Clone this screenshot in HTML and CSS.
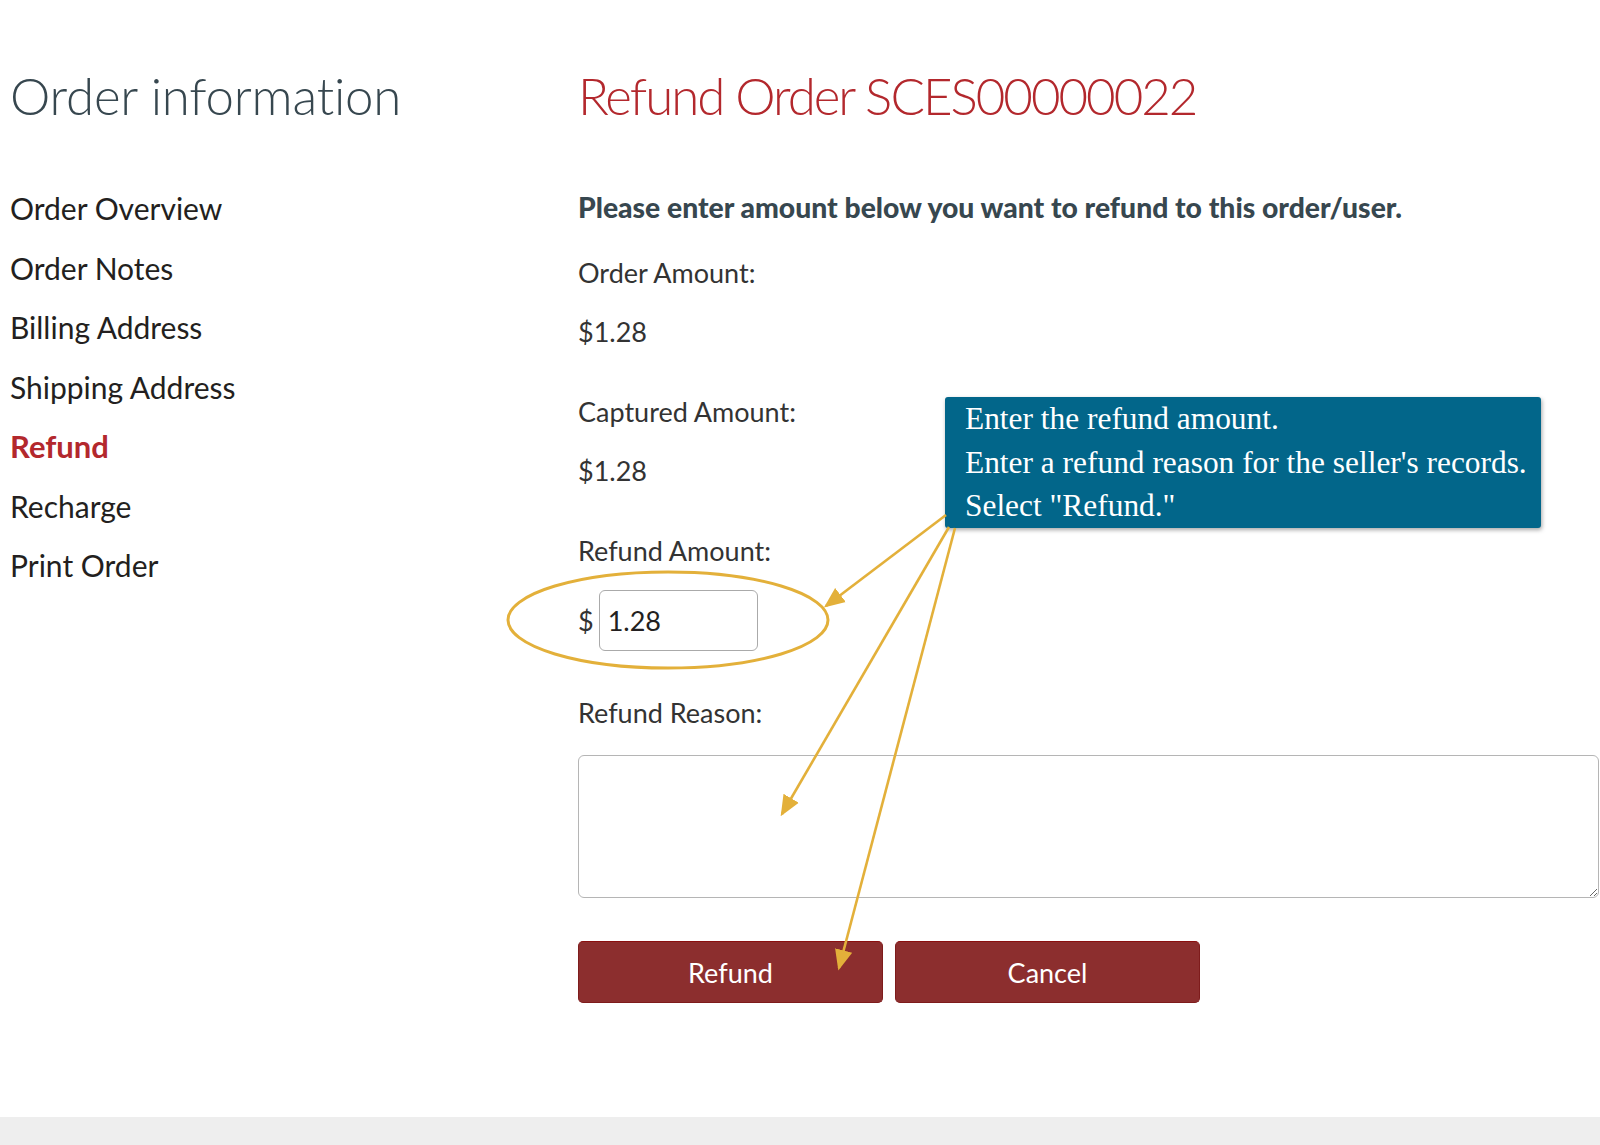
FILE: index.html
```html
<!DOCTYPE html>
<html lang="en">
<head>
<meta charset="utf-8">
<title>Refund Order</title>
<link rel="stylesheet" href="styles.css">
</head>
<body>
<div class="page">
  <aside class="side">
    <h1 class="side-title">Order information</h1>
    <nav class="side-nav">
      <a class="nav-item">Order Overview</a>
      <a class="nav-item">Order Notes</a>
      <a class="nav-item">Billing Address</a>
      <a class="nav-item">Shipping Address</a>
      <a class="nav-item active">Refund</a>
      <a class="nav-item">Recharge</a>
      <a class="nav-item">Print Order</a>
    </nav>
  </aside>
  <main class="main">
    <h1 class="main-title">Refund Order SCES00000022</h1>
    <p class="instruction">Please enter amount below you want to refund to this order/user.</p>
    <div class="field">
      <div class="label">Order Amount:</div>
      <div class="value">$1.28</div>
    </div>
    <div class="field">
      <div class="label">Captured Amount:</div>
      <div class="value">$1.28</div>
    </div>
    <div class="field">
      <div class="label">Refund Amount:</div>
      <div class="amount-row">
        <span class="currency">$</span>
        <input class="amount-input" type="text" value="1.28">
      </div>
    </div>
    <div class="field field-reason">
      <div class="label">Refund Reason:</div>
      <textarea class="reason"></textarea>
    </div>
    <div class="actions">
      <button class="btn">Refund</button>
      <button class="btn">Cancel</button>
    </div>
  </main>
</div>
<footer class="footer"></footer>

<div class="callout">
  <div>Enter the refund amount.</div>
  <div>Enter a refund reason for the seller's records.</div>
  <div>Select "Refund."</div>
</div>

<svg class="annot" width="1600" height="1145" viewBox="0 0 1600 1145">
  <defs>
    <marker id="ah" markerWidth="8" markerHeight="8" refX="7" refY="4" orient="auto" markerUnits="strokeWidth">
      <path d="M0,0.6 L8,4 L0,7.4 Z" fill="#e3b03a"/>
    </marker>
  </defs>
  <ellipse cx="668" cy="620" rx="160" ry="48" fill="none" stroke="#e3b03a" stroke-width="3"/>
  <line x1="946" y1="515" x2="826" y2="606" stroke="#e3b03a" stroke-width="2.6" marker-end="url(#ah)"/>
  <line x1="949" y1="527" x2="782" y2="814" stroke="#e3b03a" stroke-width="2.6" marker-end="url(#ah)"/>
  <line x1="955" y1="528" x2="839" y2="968" stroke="#e3b03a" stroke-width="2.6" marker-end="url(#ah)"/>
</svg>
</body>
</html>
```
FILE: styles.css
```css
html, body {
  margin: 0;
  padding: 0;
  background: #fff;
}
body {
  font-family: Lato, "Open Sans", sans-serif;
  color: #2b2b2b;
  position: relative;
  width: 1600px;
  overflow: hidden;
}
.page {
  display: grid;
  grid-template-columns: 568px 1022px;
  padding: 0 0 0 10px;
  height: 1117px;
}
.side-title,
.main-title {
  font-weight: 300;
  font-size: 51px;
  line-height: 64px;
  margin: 64px 0 0;
  letter-spacing: -0.2px;
}
.side-title {
  color: #37474f;
}
.main-title {
  color: #b3282d;
  letter-spacing: -2px;
}
.side-nav {
  display: flex;
  flex-direction: column;
  margin-top: 51px;
}
.nav-item {
  font-size: 30px;
  line-height: 59.5px;
  height: 59.5px;
  color: #231f20;
}
.nav-item.active {
  color: #b3282d;
  font-weight: 700;
  font-size: 31px;
}
.instruction {
  margin: 59px 0 0;
  font-size: 28.3px;
  line-height: 40px;
  font-weight: 900;
  color: #37474f;
}
.field {
  display: flex;
  flex-direction: column;
}
.label, .value {
  font-size: 27px;
  line-height: 40px;
  color: #333;
}
.label {
  margin-top: 26px;
}
.value {
  margin-top: 19px;
}
.field + .field .label {
  margin-top: 40px;
}
.amount-row {
  display: flex;
  align-items: center;
  margin-top: 19px;
  gap: 5px;
}
.currency {
  font-size: 27px;
  color: #333;
}
.amount-input {
  width: 159px;
  height: 61px;
  box-sizing: border-box;
  border: 1px solid #aaa;
  border-radius: 6px;
  padding: 0 0 0 8px;
  font-family: Lato, sans-serif;
  font-size: 27px;
  color: #231f20;
}
.field.field-reason .label {
  margin-top: 42px;
}
.reason {
  margin-top: 22px;
  width: 1021px;
  height: 143px;
  box-sizing: border-box;
  border: 1px solid #b5b5b5;
  border-radius: 6px;
  resize: both;
  display: block;
}
.actions {
  display: flex;
  gap: 12px;
  margin-top: 43px;
}
.btn {
  width: 305px;
  height: 62px;
  background: #8c2e2e;
  border: 1px solid #7e1c1c;
  border-top-color: #8a0f0f;
  border-radius: 5px;
  color: #fff;
  font-family: Lato, sans-serif;
  font-size: 27px;
  padding: 0;
}
.footer {
  height: 28px;
  background: #eeeeee;
}
.callout {
  position: absolute;
  left: 945px;
  top: 397px;
  width: 596px;
  height: 131px;
  box-sizing: border-box;
  padding: 0 0 0 20px;
  background: #02668a;
  border-radius: 3px;
  box-shadow: 1px 2px 4px rgba(0,0,0,0.35);
  color: #fff;
  font-family: "Liberation Serif", "Times New Roman", serif;
  font-size: 31.4px;
  line-height: 43.5px;
}
.annot {
  position: absolute;
  left: 0;
  top: 0;
  pointer-events: none;
}
```
